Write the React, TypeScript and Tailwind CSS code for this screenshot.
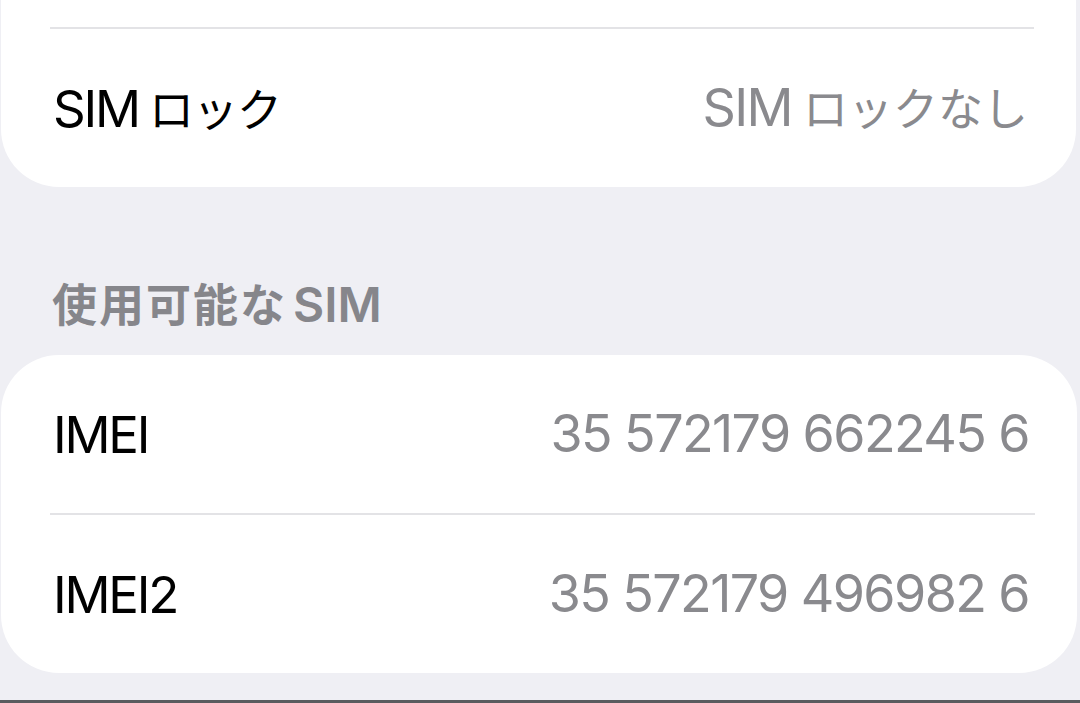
import React from "react";

const font = { fontFamily: 'Inter, "Noto Sans CJK JP", sans-serif' };

function Row({ label, value }: { label: React.ReactNode; value: React.ReactNode }) {
  return (
    <div className="flex h-[158px] items-center justify-between pl-[52px] pr-[48px]">
      <span className="text-[51px] leading-none text-black tracking-[-2.2px]">{label}</span>
      <span className="text-[52px] leading-none text-[#8a8a8e] tracking-[-1.6px]">{value}</span>
    </div>
  );
}

function Divider() {
  return <div className="ml-[49px] mr-[42px] h-[2px] bg-[#e3e3e6]" />;
}

export default function App() {
  return (
    <div className="relative h-[703px] w-[1080px] overflow-hidden bg-[#efeff4]" style={font}>
      <div className="ml-[1px] mr-[4px] rounded-b-[58px] bg-white pt-[27px]">
        <Divider />
        <Row
          label={
            <>
              SIM<span className="ml-[10px] text-[45px] tracking-[-1px]">ロック</span>
            </>
          }
          value={
            <>
              SIM<span className="ml-[11px] text-[45px] tracking-[0px]">ロックなし</span>
            </>
          }
        />
      </div>
      <div className="flex h-[168px] items-center pl-[52px] pt-[68px]">
        <span className="font-semibold leading-none text-[#86868b]">
          <span className="text-[45px] tracking-[2px]">使用可能な</span>
          <span className="ml-[6px] text-[48px] tracking-[0px]">SIM</span>
        </span>
      </div>
      <div className="ml-[1px] mr-[3px] rounded-[58px] bg-white">
        <Row label="IMEI" value="35 572179 662245 6" />
        <Divider />
        <Row label="IMEI2" value="35 572179 496982 6" />
      </div>
      <div className="absolute bottom-0 left-0 h-[3px] w-full bg-[#5a5a5e]" />
    </div>
  );
}
